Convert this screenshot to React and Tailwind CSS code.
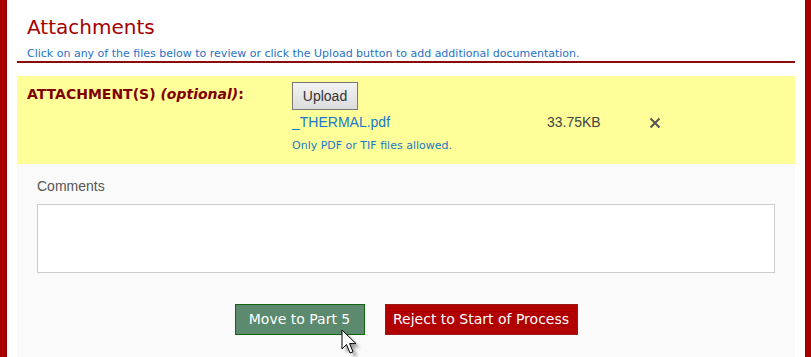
import React from 'react';

const verdana = { fontFamily: '"DejaVu Sans", Verdana, sans-serif' };

// Mouse pointer drawn over the primary button
const Cursor = () => (
    <svg className="absolute left-[106px] top-[25px]" width="22" height="30" viewBox="0 0 22 30">
        <defs>
            <filter id="sh" x="-50%" y="-50%" width="200%" height="200%">
                <feGaussianBlur stdDeviation="1.6" />
            </filter>
        </defs>
        <path d="M3 3 L3 22 L7.5 17.5 L11 26 L14 24.8 L10.6 16.6 L17 16.6 Z" fill="#000" opacity="0.35" filter="url(#sh)" transform="translate(2 2)" />
        <path d="M1 1 L1 20 L5.5 15.5 L9 24 L12 22.8 L8.6 14.6 L15 14.6 Z" fill="#fff" stroke="#000" strokeWidth="1" strokeLinejoin="miter" />
    </svg>
);

export default function App() {
    return (
        <div className="flex w-[811px] h-[357px] overflow-hidden bg-white">
            <div className="w-[7px] bg-[#aa0000] border-r border-[#8a0000]" />
            <div className="flex-1 flex flex-col pl-[10px] pr-[10px]">
                {/* Header */}
                <div className="pl-[10px] pt-[14px]">
                    <h1 className="text-[20px] leading-[26px] text-[#a30000]" style={verdana}>Attachments</h1>
                    <p className="text-[11px] leading-[14px] mt-[7px] text-[#1f72c4]" style={verdana}>
                        Click on any of the files below to review or click the Upload button to add additional documentation.
                    </p>
                </div>
                <div className="h-[2px] bg-[#8b0a0a]" />

                <div className="mt-[13px] flex-1 bg-[#fafafa] flex flex-col">
                    {/* Attachment row */}
                    <div className="bg-[#ffff99] h-[88px] flex pl-[10px] pt-[9px]">
                        <div className="w-[265px] text-[14px] font-bold text-[#800000] leading-[18px]" style={verdana}>
                            ATTACHMENT(S) <i>(optional)</i>:
                        </div>
                        <div className="flex flex-col" style={{ fontFamily: '"Liberation Sans", Arial, sans-serif' }}>
                            <button className="w-[66px] h-[28px] -mt-[3px] border border-[#777] bg-gradient-to-b from-[#f2f2f2] to-[#dcdcdc] text-[14px] text-[#333]">
                                Upload
                            </button>
                            <div className="flex items-center mt-[3px] text-[14px] leading-[18px]">
                                <span className="w-[255px] text-[#1a78c8]">_THERMAL.pdf</span>
                                <span className="w-[102px] text-[#444]">33.75KB</span>
                                <svg width="12" height="12" viewBox="0 0 12 12" className="mt-[1px]">
                                    <path d="M1.5 1.5 L10.5 10.5 M10.5 1.5 L1.5 10.5" stroke="#555" strokeWidth="2" />
                                </svg>
                            </div>
                            <p className="text-[11px] leading-[14px] mt-[8px] text-[#1a78c8]" style={verdana}>Only PDF or TIF files allowed.</p>
                        </div>
                    </div>

                    {/* Comments */}
                    <div className="px-[20px] pt-[14px]" style={{ fontFamily: '"Liberation Sans", Arial, sans-serif' }}>
                        <label className="block text-[14px] leading-[16px] text-[#555]">Comments</label>
                        <textarea className="block w-[738px] h-[69px] mt-[10px] bg-white border border-[#cccccc] resize-none" />
                    </div>

                    {/* Actions */}
                    <div className="flex justify-center gap-[20px] mt-[31px]" style={verdana}>
                        <div className="relative">
                            <button className="w-[130px] h-[31px] bg-[#5b8a6f] border border-[#136313] text-white text-[14px]">
                                Move to Part 5
                            </button>
                            <Cursor />
                        </div>
                        <button className="w-[193px] h-[31px] bg-[#b00000] border border-[#9a1a1a] text-white text-[14px]">
                            Reject to Start of Process
                        </button>
                    </div>
                </div>
            </div>
            <div className="w-[6px] bg-[#aa0000] border-l border-[#8a0000]" />
        </div>
    );
}
